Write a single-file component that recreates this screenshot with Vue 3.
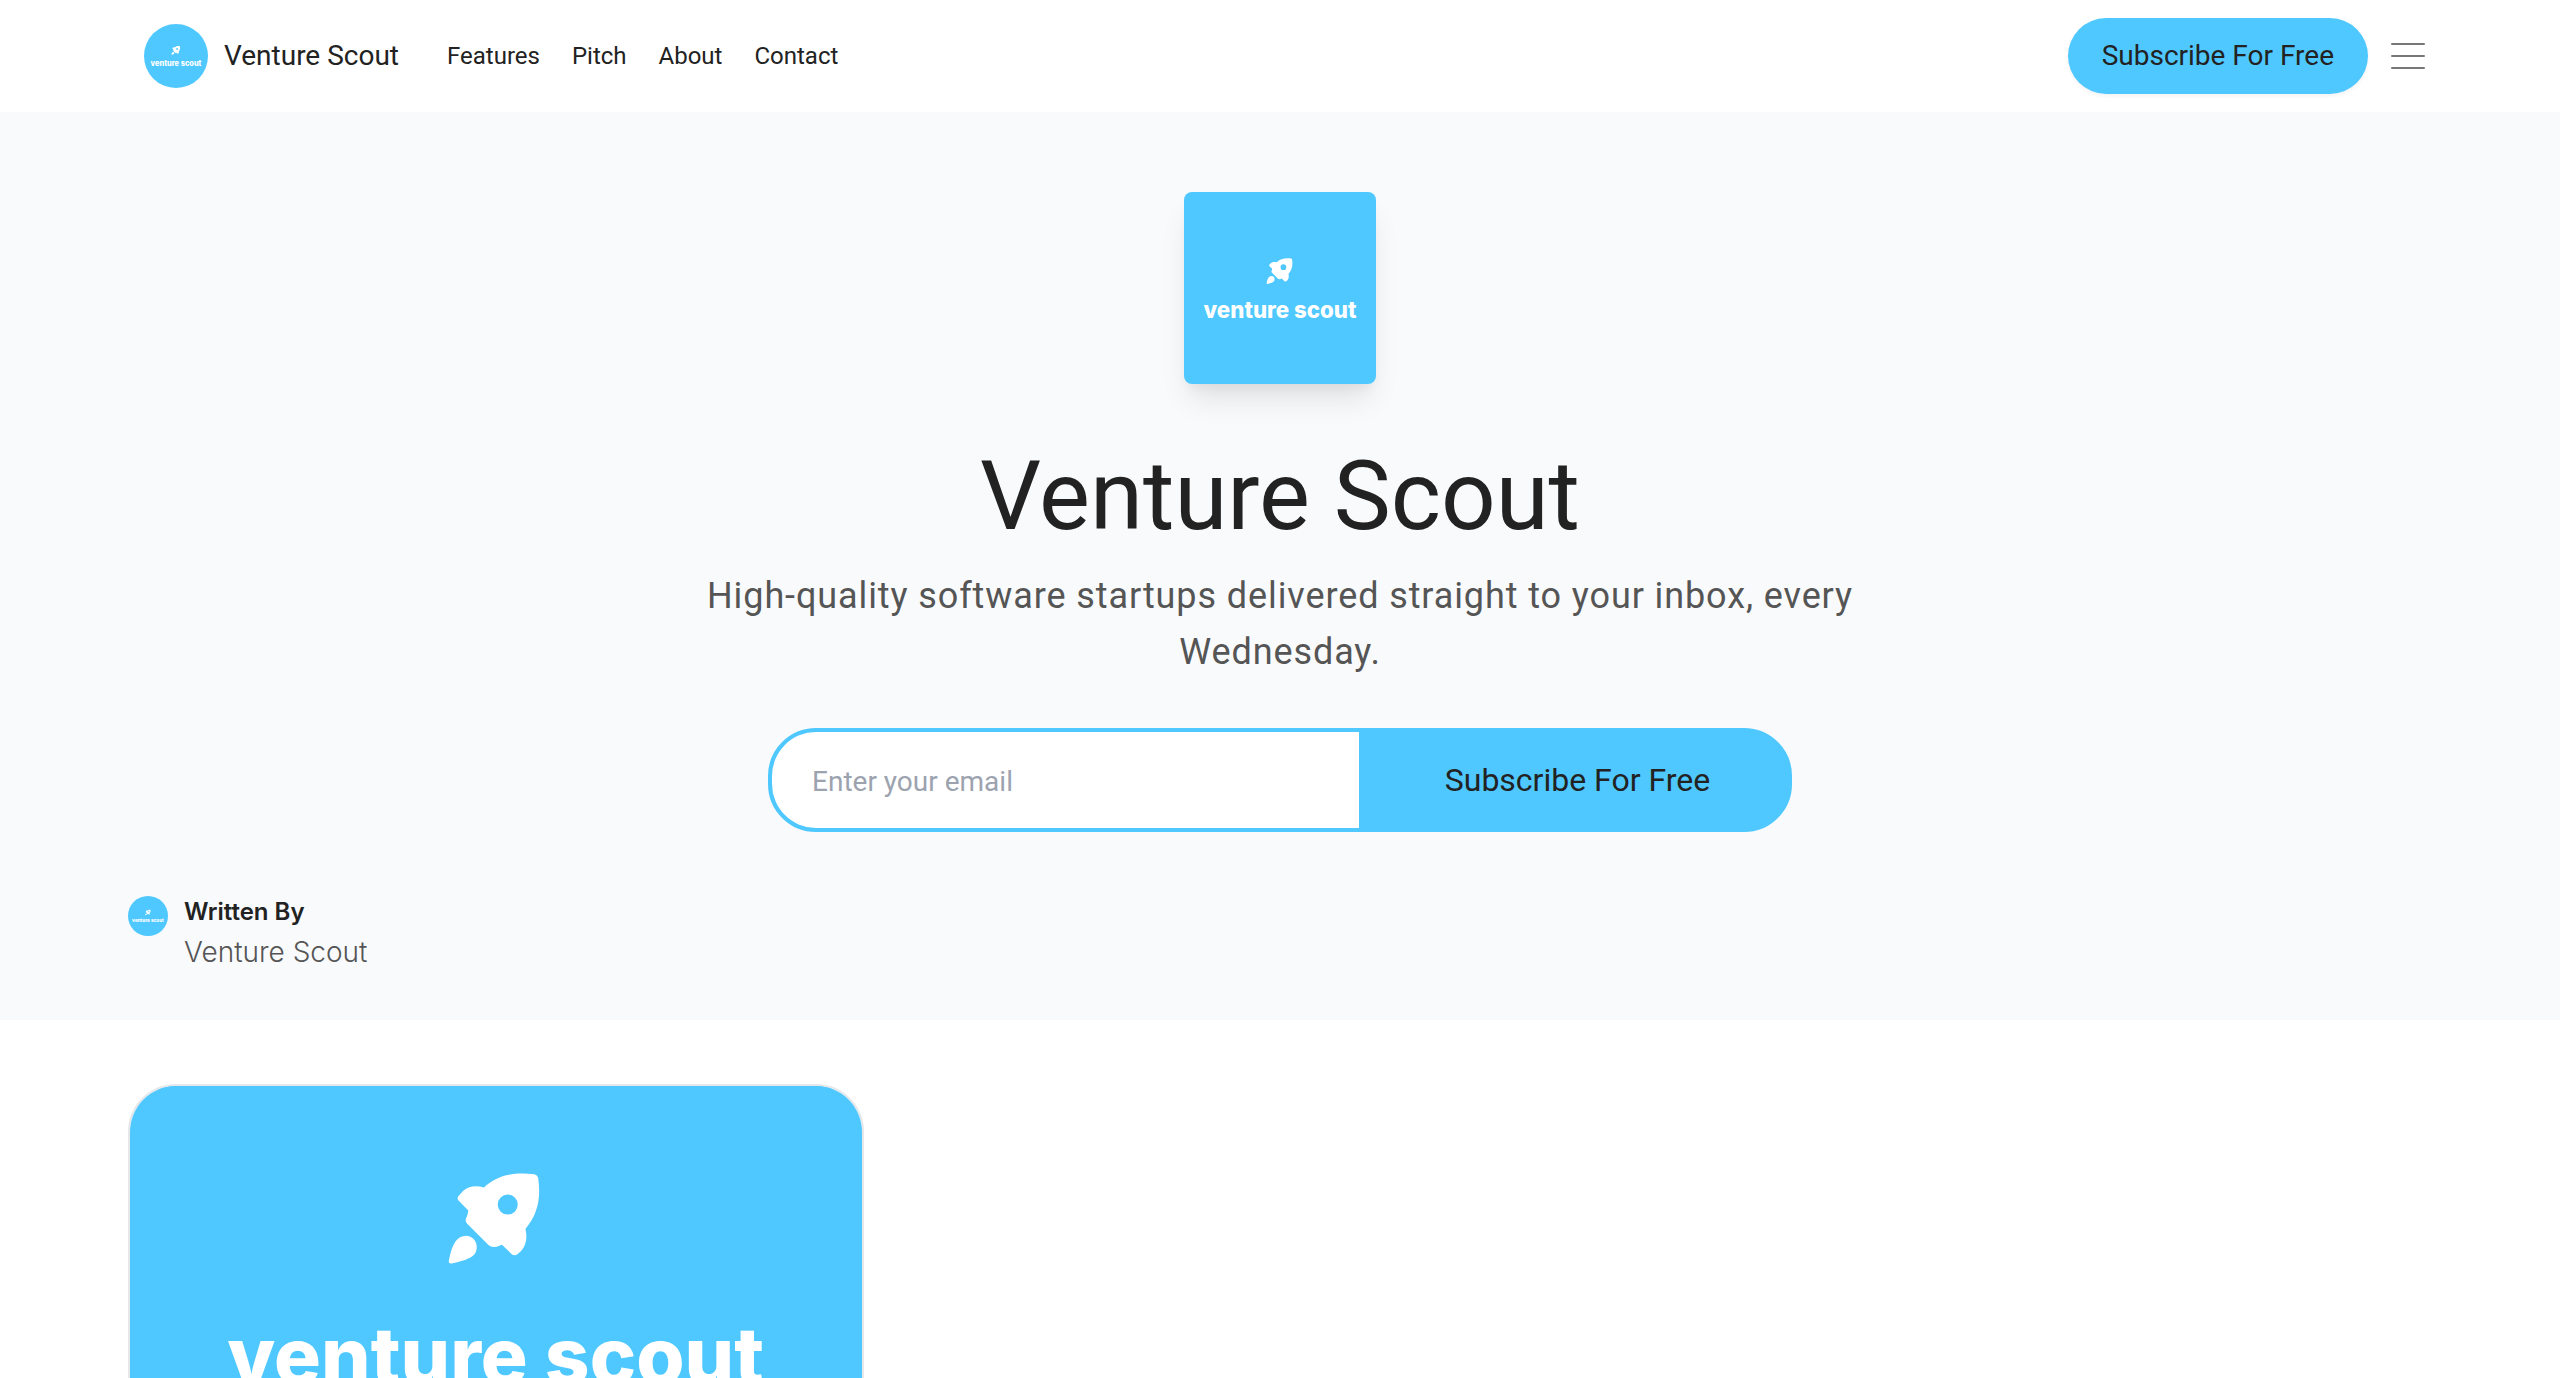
<script setup>
import { h } from 'vue'

const links = ['Features', 'Pitch', 'About', 'Contact']

const LogoArt = () =>
  h('svg', { class: 'logo-art', viewBox: '0 0 672 672', role: 'img', 'aria-label': 'Venture Scout logo' }, [
    h('rect', { width: 672, height: 672, fill: '#4fc8ff' }),
    h('g', { transform: 'translate(270 208) scale(0.3333)', fill: '#fff' }, [
      h('path', {
        'fill-rule': 'evenodd',
        d: 'M163 114C198 79 250 66 314 74Q323 76 325 85C334 146 324 194 287 238C293 263 290 287 274 304L263 314Q254 320 245 313L217 285C207 288 203 291 194 292Q184 293 177 287L112 222Q106 215 109 207C113 198 115 192 116 183L86 152Q82 146 86 140L101 124C118 109 140 107 163 114ZM234 135A30 30 0 1 0 234 195A30 30 0 1 0 234 135Z'
      }),
      h('path', { d: 'M78 275C90 257 115 252 131 267C146 282 144 307 129 319C112 331 90 336 69 341Q55 344 58 331C62 311 67 291 78 275Z' })
    ]),
    h('text', { x: 336, y: 442, 'text-anchor': 'middle', fill: '#fff', 'font-family': 'Inter, "Open Sans", sans-serif', 'font-weight': 800, 'font-size': 78 }, 'venture scout')
  ])
</script>

<template>
  <div class="page">
    <header class="bar">
      <a class="brand" href="#">
        <span class="brand-logo"><LogoArt /></span>
        <span>Venture Scout</span>
      </a>
      <nav class="links">
        <a v-for="link in links" :key="link" href="#">{{ link }}</a>
      </nav>
      <div class="actions">
        <button class="subscribe" type="button">Subscribe For Free</button>
        <button class="menu" type="button" aria-label="Open menu">
          <i></i><i></i><i></i>
        </button>
      </div>
    </header>

    <section class="hero">
      <div class="intro">
        <div class="cover"><LogoArt /></div>
        <h1>Venture Scout</h1>
        <p class="tagline">High-quality software startups delivered straight to your inbox, every Wednesday.</p>
        <form class="signup" @submit.prevent>
          <input type="email" placeholder="Enter your email" aria-label="Email address" />
          <button type="submit">Subscribe For Free</button>
        </form>
      </div>
      <div class="author">
        <div class="avatar"><LogoArt /></div>
        <div>
          <div class="written">Written By</div>
          <div class="name">Venture Scout</div>
        </div>
      </div>
    </section>

    <main class="posts">
      <a class="card" href="#">
        <div class="thumb">
          <div class="thumb-art"><LogoArt /></div>
        </div>
      </a>
    </main>
  </div>
</template>

<style>
body {
  margin: 0;
}
.logo-art {
  display: block;
  width: 100%;
  height: 100%;
}
</style>

<style scoped>
.page {
  height: 100vh;
  overflow: hidden;
  background: #fff;
  color: #222;
  font-family: Roboto, "Liberation Sans", sans-serif;
}
.page * {
  box-sizing: border-box;
}
a {
  color: inherit;
  text-decoration: none;
}
button,
input {
  font-family: inherit;
  color: inherit;
  border: 0;
  margin: 0;
}
.bar {
  display: flex;
  align-items: center;
  height: 112px;
  padding: 0 128px 0 144px;
}
.brand {
  display: flex;
  align-items: center;
  gap: 16px;
  font-size: 28px;
  line-height: 40px;
}
.brand-logo {
  width: 64px;
  height: 64px;
  border-radius: 50%;
  overflow: hidden;
}
.links {
  display: flex;
  gap: 32px;
  margin-left: 48px;
  font-size: 24px;
  line-height: 32px;
}
.actions {
  display: flex;
  align-items: center;
  gap: 16px;
  margin-left: auto;
}
.subscribe {
  height: 76px;
  padding: 0 34px;
  border-radius: 38px;
  background: #4fc8ff;
  font-size: 28px;
  line-height: 40px;
  box-shadow: 0 2px 4px rgba(0, 0, 0, 0.05);
}
.menu {
  display: flex;
  flex-direction: column;
  align-items: center;
  justify-content: center;
  gap: 10px;
  width: 48px;
  height: 48px;
  padding: 0;
  background: none;
}
.menu i {
  width: 34px;
  height: 2px;
  border-radius: 1px;
  background: #777;
}
.hero {
  padding: 80px 128px 48px;
  background: #f9fafc;
}
.intro {
  display: flex;
  flex-direction: column;
  align-items: center;
  text-align: center;
}
.cover {
  width: 192px;
  height: 192px;
  border-radius: 8px;
  overflow: hidden;
  box-shadow: 0 20px 30px -6px rgba(0, 0, 0, 0.1), 0 8px 12px -4px rgba(0, 0, 0, 0.05);
}
h1 {
  margin: 64px 0 0;
  font-size: 96px;
  font-weight: 400;
  line-height: 96px;
}
.tagline {
  max-width: 1152px;
  margin: 24px 0 0;
  color: #555;
  font-size: 36px;
  line-height: 56px;
  letter-spacing: 0.025em;
}
.signup {
  display: flex;
  width: 1024px;
  max-width: 100%;
  height: 104px;
  margin-top: 48px;
  border: 4px solid #4fc8ff;
  border-radius: 48px;
  overflow: hidden;
  background: #4fc8ff;
}
.signup input {
  flex: 1;
  min-width: 0;
  padding: 2px 40px 0;
  border-radius: 0;
  background: #fff;
  font-size: 28px;
  outline: none;
}
.signup input::placeholder {
  color: #9ca3af;
  opacity: 1;
}
.signup button {
  width: 429px;
  padding: 0 0 0 8px;
  background: #4fc8ff;
  font-size: 32px;
}
.author {
  display: flex;
  gap: 16px;
  margin-top: 60px;
  font-family: Inter, "Liberation Sans", sans-serif;
}
.avatar {
  width: 40px;
  height: 40px;
  margin-top: 4px;
  border-radius: 50%;
  overflow: hidden;
}
.written {
  font-size: 24px;
  font-weight: 600;
  line-height: 40px;
}
.name {
  color: #555;
  font-size: 28px;
  font-weight: 300;
  line-height: 40px;
}
.posts {
  display: grid;
  grid-template-columns: repeat(3, 1fr);
  gap: 48px;
  padding: 64px 128px;
}
.card {
  border: 2px solid #e5e7eb;
  border-radius: 48px;
  overflow: hidden;
}
.thumb {
  display: flex;
  align-items: center;
  justify-content: center;
  aspect-ratio: 1200 / 630;
  overflow: hidden;
  background: #4fc8ff;
}
.thumb-art {
  flex: none;
  width: 92%;
  aspect-ratio: 1;
}
</style>
